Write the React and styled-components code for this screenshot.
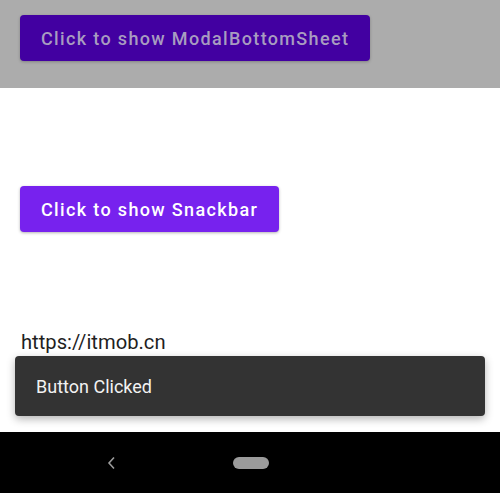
import styled, { createGlobalStyle } from "styled-components";

const GlobalStyle = createGlobalStyle`
    html, body {
        margin: 0;
        padding: 0;
        background: #ffffff;
    }
    * {
        box-sizing: border-box;
    }
`;

const Screen = styled.div`
    width: 500px;
    height: 493px;
    display: flex;
    flex-direction: column;
    overflow: hidden;
    font-family: Roboto, "Liberation Sans", sans-serif;
`;

// top part sits under the modal scrim
const ScrimArea = styled.div`
    height: 88px;
    background: #acacac;
    padding: 15px 20px 0;
`;

const Content = styled.div`
    position: relative;
    flex: 1;
    display: flex;
    flex-direction: column;
    align-items: flex-start;
    padding: 98px 20px 0;
    background: #ffffff;
`;

const Button = styled.button`
    height: 46px;
    padding: 0 21px;
    border: none;
    border-radius: 4px;
    background: ${(p) => (p.$dimmed ? "#4200a1" : "#7722ee")};
    color: ${(p) => (p.$dimmed ? "#a89cc0" : "#ffffff")};
    font-family: Roboto, "Liberation Sans", sans-serif;
    font-weight: 500;
    font-size: 18px;
    letter-spacing: 1.35px;
    box-shadow: ${(p) => (p.$dimmed ? "0 1px 3px rgba(0,0,0,0.25)" : "0 1px 3px rgba(0,0,0,0.3)")};
`;

const Link = styled.div`
    margin-top: 98px;
    font-size: 20.2px;
    line-height: 24px;
    color: #1f1f1f;
    padding-left: 1px;
`;

const Snackbar = styled.div`
    position: absolute;
    left: 15px;
    right: 15px;
    bottom: 16px;
    height: 60px;
    display: flex;
    align-items: center;
    padding: 0 21px;
    background: #333333;
    border-radius: 4px;
    color: #f2f2f2;
    font-size: 18px;
    box-shadow: 0 3px 8px rgba(0, 0, 0, 0.3);
`;

const NavBar = styled.div`
    height: 61px;
    background: #000000;
    display: flex;
    align-items: center;
    padding-left: 106px;
    gap: 117px;
`;

const HomePill = styled.div`
    width: 36px;
    height: 12px;
    border-radius: 6px;
    background: #9b9b9b;
`;

const App = () => {
    return (
        <>
            <GlobalStyle />
            <Screen>
                <ScrimArea>
                    <Button $dimmed>Click to show ModalBottomSheet</Button>
                </ScrimArea>
                <Content>
                    <Button>Click to show Snackbar</Button>
                    <Link>https://itmob.cn</Link>
                    <Snackbar>Button Clicked</Snackbar>
                </Content>
                <NavBar>
                    <svg width="10" height="14" viewBox="0 0 10 14">
                        <path d="M8 1.5 L3 7 L8 12.5" fill="none" stroke="#9b9b9b" strokeWidth="1.6" />
                    </svg>
                    <HomePill />
                </NavBar>
            </Screen>
        </>
    );
};

export default App;
